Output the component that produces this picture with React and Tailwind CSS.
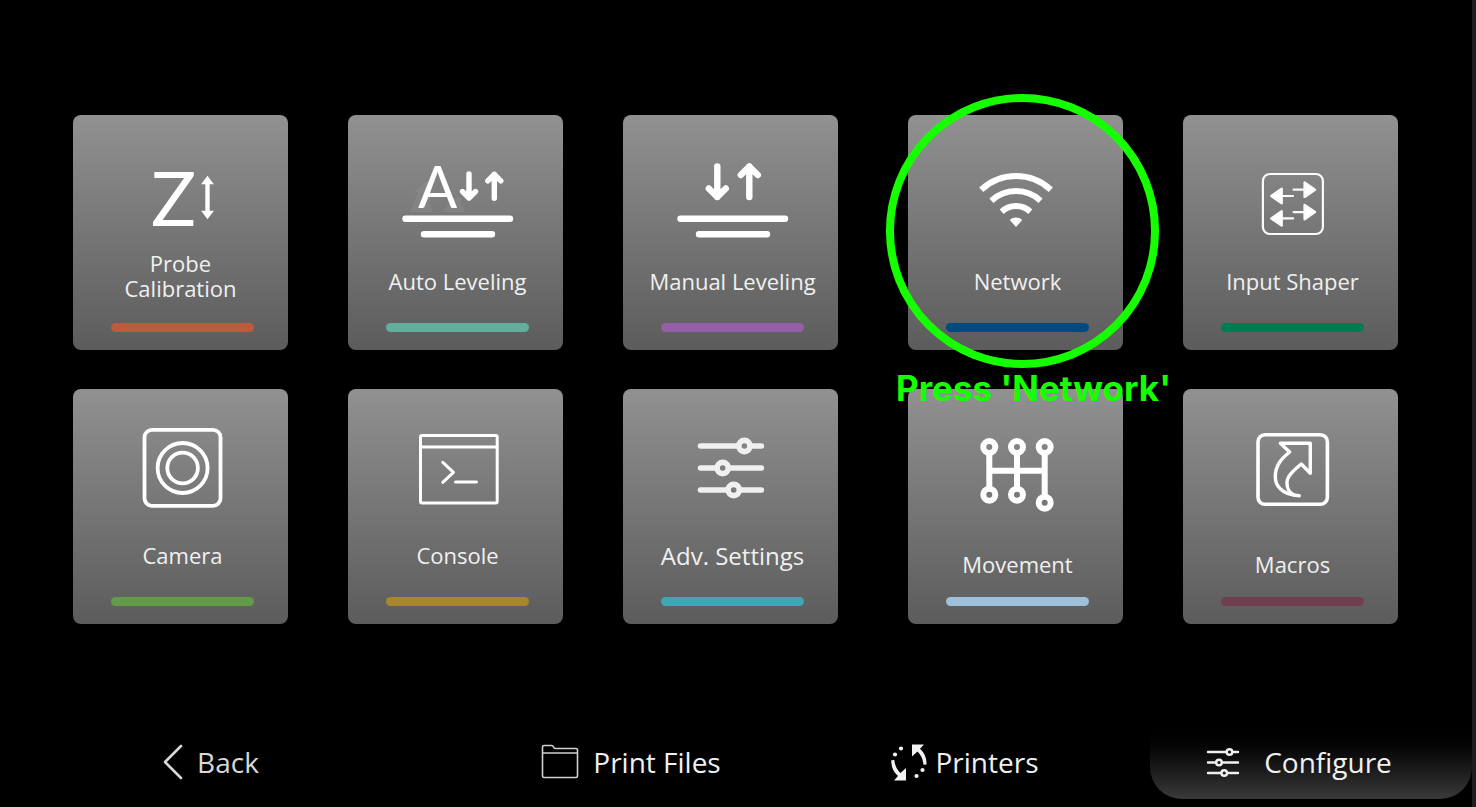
import React from 'react';

const round = { strokeLinecap: 'round', strokeLinejoin: 'round' };

function Art({ children, color = '#fff' }) {
  return (
    <svg
      aria-hidden="true"
      viewBox="0 0 215 130"
      className="block h-[130px] w-full"
      fill="none"
      stroke={color}
      {...round}
    >
      {children}
    </svg>
  );
}

function ProbeIcon() {
  return (
    <Art>
      <text x="78" y="111" fontFamily="Lato, sans-serif" fontSize="75" fill="#fff" stroke="none">Z</text>
      <path d="M134.5 66v33" strokeWidth="4.4" />
      <path d="M134.5 60.7l6.4 8.6h-12.800zM134.5 104.3l6.4-8.600h-12.800z" fill="#fff" stroke="none" />
    </Art>
  );
}

function BedLines() {
  return <path d="M57.5 103.7h104.5M76 119.3h68" strokeWidth="6.4" />;
}

function AutoLevelIcon() {
  return (
    <Art>
      <path d="M62 97l8-19-4-1 14-12 4 32zM94 97l10-14h10l-2 3 5 11z" fill="#fff" fillOpacity="0.06" stroke="none" />
      <text x="70" y="93.3" fontFamily="Lato, sans-serif" fontSize="58" fill="#fff" stroke="none">A</text>
      <path d="M121 59v24M114.5 76.5l6.5 6.5 6.5-6.5M146.3 83.3v-24M139.8 65.8l6.5-6.5 6.5 6.5" strokeWidth="5.4" />
      <BedLines />
    </Art>
  );
}

function ManualLevelIcon() {
  return (
    <Art>
      <path d="M94.3 51.5v30.5M85.8 73.5l8.5 8.5 8.5-8.5M126.3 82v-30.5M117.8 60l8.5-8.5 8.5 8.5" strokeWidth="6.4" />
      <BedLines />
    </Art>
  );
}

function WifiIcon() {
  return (
    <Art>
      <g strokeWidth="6" strokeLinecap="butt">
        <path d="M73.2 74.7a51 51 0 0 1 69.6 0" />
        <path d="M83.4 85.7a36 36 0 0 1 49.2 0" />
        <path d="M93.7 96.7a21 21 0 0 1 28.6 0" />
      </g>
      <path d="M101.7 105a9.5 9.5 0 0 1 12.6 0l-6.3 7z" fill="#fff" stroke="none" />
    </Art>
  );
}

function ShaperIcon() {
  return (
    <Art color="#fafafa">
      <rect x="79.9" y="59" width="60" height="60" rx="7" strokeWidth="2.2" />
      {[0, 22.4].map((dy) => (
        <g key={dy} transform={`translate(0 ${dy})`}>
          <path d="M99 81h11M110.6 74.7h11" strokeWidth="2.2" />
          <path d="M88.300 81l10.400-7.200v14.400zM132 74.700l-10.400-7.200v14.400z" fill="#fff" strokeWidth="2.400" />
        </g>
      ))}
    </Art>
  );
}

function CameraIcon() {
  return (
    <Art>
      <rect x="71.5" y="40.8" width="76" height="76" rx="7.5" strokeWidth="3.8" />
      <circle cx="109.600" cy="79" r="25" strokeWidth="3.8" />
      <circle cx="109.600" cy="79" r="15.3" strokeWidth="3.8" />
    </Art>
  );
}

function ConsoleIcon() {
  return (
    <Art>
      <rect x="72.5" y="46.5" width="76.7" height="67.6" rx="1.5" strokeWidth="3" />
      <path d="M73 58h76M94.8 73.3l10.7 10-10.7 10M107.5 93h21" strokeWidth="3" />
    </Art>
  );
}

function SettingsIcon() {
  const rows = [[121.4, 57], [99.7, 79], [110.7, 101]];
  return (
    <Art color="#f0f0f0">
      {rows.map(([x, y]) => (
        <g key={y} strokeWidth="5.6">
          <path d={`M77.500 ${y}H${x - 6}M${x + 6} ${y}H138.400`} />
          <circle cx={x} cy={y} r="5.6" />
        </g>
      ))}
    </Art>
  );
}

function MovementIcon() {
  const nodes = [[81.3, 58], [109, 58], [136.7, 58], [81.3, 105.7], [109, 105.7], [136.7, 113.7]];
  return (
    <Art>
      <path d="M81.3 64v35.7M109 64v35.7M136.7 64v43.7M81.3 81.7h55.4" strokeWidth="6" strokeLinecap="butt" />
      {nodes.map(([x, y]) => (
        <circle key={`${x}-${y}`} cx={x} cy={y} r="6" strokeWidth="6" />
      ))}
    </Art>
  );
}

function MacrosIcon() {
  return (
    <Art>
      <rect x="75" y="45.8" width="69.4" height="69.4" rx="7" strokeWidth="3.6" />
      <path
        d="M116.3 106.7C98 106 92.3 96 92.3 87.7C92.3 76 99 69 106.7 63L97.3 54.3H127.3V84.3L118.3 75C111 81 104 87 104 93.5C104 101 108 106.5 116.3 106.7Z"
        strokeWidth="3.4"
      />
    </Art>
  );
}

const leftTiles = [
  { label: 'Probe Calibration', icon: ProbeIcon, bar: 'bg-[#bf5b3d]', text: 'max-w-[140px] pb-2.5 text-[22px]' },
  { label: 'Auto Leveling', icon: AutoLevelIcon, bar: 'bg-[#64ae9e]', text: 'whitespace-nowrap pl-1 text-[22px]' },
  { label: 'Manual Leveling', icon: ManualLevelIcon, bar: 'bg-[#935fa7]', text: 'whitespace-nowrap pl-1 text-[22px]' },
  { label: 'Camera', icon: CameraIcon, bar: 'bg-[#639b4b]', text: 'whitespace-nowrap pl-1 text-[22px]' },
  { label: 'Console', icon: ConsoleIcon, bar: 'bg-[#a8862f]', text: 'whitespace-nowrap pl-1 text-[22px]' },
  { label: 'Adv. Settings', icon: SettingsIcon, bar: 'bg-[#3fa6b5]', text: 'whitespace-nowrap pl-1 text-[24px]' },
];

const rightTiles = [
  { label: 'Network', icon: WifiIcon, bar: 'bg-[#004a80]', text: 'whitespace-nowrap pl-1 text-[22px]', highlight: true },
  { label: 'Input Shaper', icon: ShaperIcon, bar: 'bg-[#007d50]', text: 'whitespace-nowrap pl-1 text-[22px]' },
  { label: 'Movement', icon: MovementIcon, bar: 'bg-[#9fc0da]', text: 'whitespace-nowrap pl-1 pt-[18px] text-[22px]' },
  { label: 'Macros', icon: MacrosIcon, bar: 'bg-[#713e50]', text: 'whitespace-nowrap pl-1 pt-[18px] text-[22px]' },
];

function Tile({ label, icon: Icon, bar, text, highlight }) {
  return (
    <div className={highlight ? 'relative z-10' : ''}>
      <button
        type="button"
        className="flex h-[235px] w-full cursor-pointer flex-col items-center rounded-lg bg-linear-to-b from-[#919191] to-[#5c5c5c]"
      >
        <Icon />
        <span className={`flex h-[72px] items-center leading-[25px] text-[#f0f0f0] ${text}`}>{label}</span>
        <span className="mt-1.5 flex w-full justify-center pl-[3px]">
          <span className={`h-[9px] w-[143px] rounded-full ${bar}`} />
        </span>
      </button>
      {highlight && (
        <div className="pointer-events-none absolute -top-[21px] -left-[22px] w-[273px]">
          <div className="h-[274px] rounded-full border-8 border-[#15ff00]" />
          <p className="pl-2.5 font-[Inter,sans-serif] text-[35px] leading-[40px] font-bold whitespace-nowrap text-[#15ff00]">
            Press 'Network'
          </p>
        </div>
      )}
    </div>
  );
}

function BackIcon() {
  return (
    <svg aria-hidden="true" width="20" height="36" viewBox="0 0 20 36" fill="none" stroke="#d8d8d8" strokeWidth="2.6" {...round}>
      <path d="M18 2L2 18l16 16" />
    </svg>
  );
}

function FolderIcon() {
  return (
    <svg aria-hidden="true" width="38" height="36" viewBox="0 0 38 36" fill="none" stroke="#d0d0d0" strokeWidth="1.6" {...round}>
      <path d="M1.5 32V3q0-1.500 1.500-1.500h7.500q1.500 0 2 1.500t2 1.500h20.500q1.500 0 1.500 1.500v26q0 1.500-1.500 1.500H3q-1.500 0-1.500-1.500zM1.500 9h35" />
    </svg>
  );
}

function PrintersIcon() {
  return (
    <svg aria-hidden="true" width="40" height="40" viewBox="0 0 40 40" fill="#f2f2f2">
      <path d="M23 2.500h12l-4 4.200Q38 13 37.500 22.500l-3 .3Q34 15 28.500 9.500L23 14.500zM17 38.500H5l4-4.500Q2 28 2.300 18.200l3-.2Q6 26 11.500 31l5.500-5z" />
      <circle cx="12" cy="6.500" r="2.100" />
      <circle cx="6" cy="12.500" r="2.100" />
      <circle cx="33.500" cy="28" r="2.100" />
      <circle cx="27.500" cy="34" r="2.100" />
    </svg>
  );
}

function ConfigureIcon() {
  const rows = [[23.5, 6], [13, 16.500], [18.200, 27]];
  return (
    <svg aria-hidden="true" width="34" height="32" viewBox="0 0 34 32" fill="none" stroke="#f0f0f0" strokeWidth="2.400" {...round}>
      {rows.map(([x, y]) => (
        <g key={y}>
          <path d={`M2 ${y}H${x - 3}M${x + 3} ${y}H32`} />
          <circle cx={x} cy={y} r="2.800" />
        </g>
      ))}
    </svg>
  );
}

export default function App() {
  return (
    <div className="flex min-h-screen flex-col border-r-4 border-[#1e1e1e] bg-black pt-[115px] pb-2 font-['Open_Sans',sans-serif]">
      <main className="grid grid-cols-[765fr_490fr] gap-[70px] pr-[74px] pl-[73px]">
        <section className="grid grid-cols-3 gap-x-[60px] gap-y-[39px]">
          {leftTiles.map((t) => <Tile key={t.label} {...t} />)}
        </section>
        <section className="grid grid-cols-2 gap-x-[60px] gap-y-[39px]">
          {rightTiles.map((t) => <Tile key={t.label} {...t} />)}
        </section>
      </main>
      <nav className="mt-auto grid h-20 grid-cols-[422fr_418fr_248fr_62fr_322fr] text-[28px] text-[#f0f0f0]">
        <a href="#back" className="flex items-center justify-center gap-3.5 pt-1.5 text-[#d8d8d8]">
          <BackIcon />
          Back
        </a>
        <a href="#files" className="flex items-center justify-center gap-3.5 pt-1.5">
          <FolderIcon />
          Print Files
        </a>
        <a href="#printers" className="flex items-center justify-center gap-1.5 pt-1.5">
          <PrintersIcon />
          Printers
        </a>
        <a
          href="#configure"
          className="col-start-5 flex items-center justify-center gap-6 rounded-b-[32px] bg-linear-to-b from-black to-[#3a3a3a] pt-1.5 pr-6"
        >
          <ConfigureIcon />
          Configure
        </a>
      </nav>
    </div>
  );
}
